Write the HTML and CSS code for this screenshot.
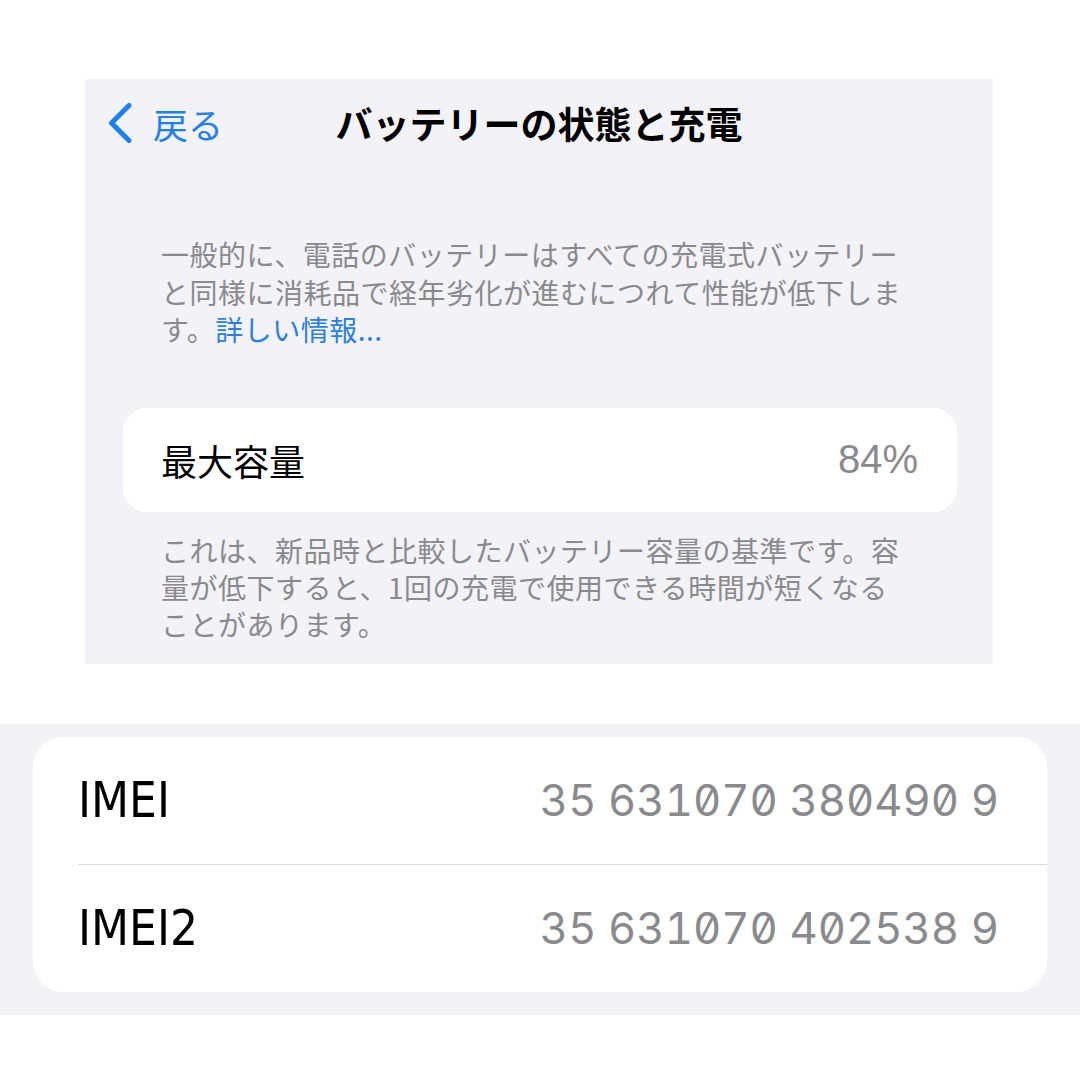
FILE: index.html
```html
<!DOCTYPE html>
<html lang="ja">
<head>
<meta charset="utf-8">
<link rel="stylesheet" href="styles.css">
</head>
<body>
<div class="top">
  <div class="nav">
    <div class="back">
      <svg class="chev" width="26" height="42" viewBox="0 0 26 42"><path d="M22 3.5 L4.5 21 L22 38.5" fill="none" stroke="#1f7ff0" stroke-width="5" stroke-linecap="round" stroke-linejoin="round"/></svg>
      <span>戻る</span>
    </div>
    <div class="title">バッテリーの状態と充電</div>
    <div></div>
  </div>
  <p class="note">一般的に、電話のバッテリーはすべての充電式バッテリー<br>と同様に消耗品で経年劣化が進むにつれて性能が低下しま<br>す。<span class="link">詳しい情報...</span></p>
  <div class="cap-card">
    <span class="cap-label">最大容量</span>
    <span class="cap-val">84%</span>
  </div>
  <p class="note foot">これは、新品時と比較したバッテリー容量の基準です。容<br>量が低下すると、1回の充電で使用できる時間が短くなる<br>ことがあります。</p>
</div>
<div class="bottom">
  <div class="imei-card">
    <div class="row"><span class="lbl">IMEI</span><span class="val">35 631070 380490 9</span></div>
    <div class="row"><span class="lbl">IMEI2</span><span class="val">35 631070 402538 9</span></div>
  </div>
</div>
</body>
</html>
```

FILE: styles.css
```css
body {
  margin: 0;
  background: #ffffff;
  font-family: "Noto Sans CJK JP", sans-serif;
}
.top {
  margin: 79px 0 0 85px;
  width: 908px;
  height: 585px;
  background: #f2f2f7;
}
.nav {
  height: 88px;
  display: grid;
  grid-template-columns: 1fr auto 1fr;
  align-items: center;
  padding: 0 22px;
}
.back {
  display: flex;
  align-items: center;
  gap: 20px;
  color: #1f7ff0;
  font-size: 35px;
  line-height: 1;
}
.chev { display: block; }
.title {
  font-size: 37px;
  font-weight: 700;
  color: #000;
  line-height: 1;
}
.note {
  margin: 69px 0 0 76px;
  font-size: 28px;
  line-height: 37.5px;
  letter-spacing: 0.5px;
  color: #8a8a8e;
  white-space: nowrap;
}
.link { color: #2a7fe0; }
.cap-card {
  margin: 59px 36px 0 38px;
  height: 104px;
  background: #fff;
  border-radius: 24px;
  display: flex;
  align-items: center;
  justify-content: space-between;
  padding: 0 39px 0 38px;
}
.cap-label {
  font-size: 36px;
  color: #000;
}
.cap-val {
  font-family: "Liberation Sans", sans-serif;
  font-size: 40px;
  color: #8a8a8e;
}
.foot {
  margin-top: 20px;
  line-height: 37px;
}
.bottom {
  margin-top: 60px;
  background: #f2f2f7;
  padding: 13px 33px 23px;
}
.imei-card {
  background: #fff;
  border-radius: 30px;
}
.row {
  height: 127px;
  display: flex;
  align-items: center;
  justify-content: space-between;
  margin-left: 45px;
  padding-right: 48px;
}
.row + .row { border-top: 1px solid #d8d8dc; }
.lbl {
  font-family: "DejaVu Sans Condensed", Roboto, sans-serif;
  font-size: 49px;
  color: #000;
}
.val {
  font-family: Inter, sans-serif;
  font-size: 43.6px;
  color: #8a8a8e;
  font-feature-settings: "tnum" 1, "zero" 1;
}
```
